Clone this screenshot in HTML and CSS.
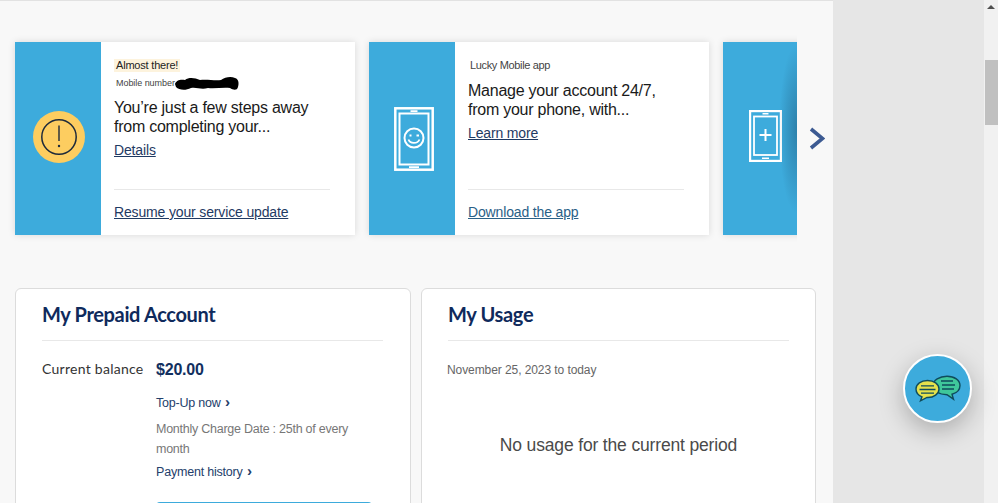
FILE: index.html
```html
<!DOCTYPE html>
<html lang="en">
<head>
<meta charset="utf-8">
<title>My Account</title>
<link rel="stylesheet" href="styles.css">
</head>
<body>
<div class="page">
  <main class="main">
    <section class="carousel">
      <div class="viewport">
        <article class="promo">
          <div class="promo-side">
            <svg class="icon-alert" width="52" height="52" viewBox="0 0 52 52"><circle cx="26" cy="26" r="26" fill="#fdcd60"/><circle cx="26" cy="26" r="17.2" fill="none" stroke="#1e2a3a" stroke-width="1.5"/><path d="M26 14.5V30" stroke="#1e2a3a" stroke-width="1.4" fill="none"/><circle cx="26" cy="35" r="1.2" fill="#1e2a3a"/></svg>
          </div>
          <div class="promo-body">
            <div class="promo-top">
              <span class="tag">Almost there!</span>
              <div class="meta">Mobile number<svg class="scribble" width="64" height="15" viewBox="0 0 64 15"><path d="M0 8C1 4 6 3 10 4C14 1 20 2 25 4C32 3 40 5 46 4C50 1 56 0 60 2C64 3 64 8 63 11C62 15 58 14 55 12C48 11 40 13 33 12C26 14 22 11 16 12C10 15 4 14 1 11Z" fill="#000"/></svg></div>
              <h3 class="promo-title">You’re just a few steps away<br>from completing your...</h3>
              <a class="link">Details</a>
            </div>
            <div class="promo-cta"><a class="link">Resume your service update</a></div>
          </div>
        </article>
        <article class="promo">
          <div class="promo-side">
            <svg class="icon-phone" width="40" height="64" viewBox="0 0 40 64" fill="none" stroke="#fff"><rect x="1.300" y="1.300" width="37.400" height="61.400" stroke-width="2.500"/><rect x="5.500" y="6.500" width="29" height="51" stroke-width="2"/><path d="M16.500 4.200h7M15 60.200h10" stroke-width="1.800"/><circle cx="20" cy="31" r="9.500" stroke-width="2"/><path d="M14.500 32.500c1.500 4.500 9 4.500 11 0" stroke-width="1.800"/><path d="M16.500 27.500v2M22.500 28.500h2.500" stroke-width="2"/></svg>
          </div>
          <div class="promo-body">
            <div class="promo-top">
              <span class="tag tag-plain">Lucky Mobile app</span>
              <h3 class="promo-title title-app">Manage your account 24/7,<br>from your phone, with...</h3>
              <a class="link">Learn more</a>
            </div>
            <div class="promo-cta"><a class="link link-light">Download the app</a></div>
          </div>
        </article>
        <article class="promo">
          <div class="promo-side">
            <svg class="icon-plus" width="33" height="52" viewBox="0 0 33 52" fill="none" stroke="#fff"><rect x="1.100" y="1.100" width="30.800" height="49.800" stroke-width="2.200"/><rect x="5" y="6.500" width="23" height="38.500" stroke-width="1.800"/><path d="M13.500 3.800h6M13 48.300h7" stroke-width="1.600"/><path d="M16.500 19v12M10.500 25h12" stroke-width="2"/></svg>
          </div>
        </article>
        <div class="fade"></div>
      </div>
      <button class="next" aria-label="Next"><svg width="16" height="23" viewBox="0 0 16 23" fill="none"><path d="M2 2l11.500 9.500L2 21" stroke="#3c5a92" stroke-width="3.600"/></svg></button>
    </section>
    <section class="panels">
      <article class="panel">
        <h2 class="panel-title">My Prepaid Account</h2>
        <div class="balance">
          <div class="balance-label">Current balance</div>
          <div class="balance-col">
            <div class="amount">$20.00</div>
            <a class="action action-top">Top-Up now <span class="chev">›</span></a>
            <p class="charge">Monthly Charge Date : 25th of every month</p>
            <a class="action">Payment history <span class="chev">›</span></a>
            <div class="cta-button"></div>
          </div>
        </div>
      </article>
      <article class="panel panel-usage">
        <h2 class="panel-title">My Usage</h2>
        <p class="period">November 25, 2023 to today</p>
        <p class="empty">No usage for the current period</p>
      </article>
    </section>
  </main>
  <aside class="side"></aside>
  <div class="scrollbar">
    <div class="scroll-up"></div>
    <div class="scroll-thumb"></div>
  </div>
</div>
<button class="chat" aria-label="Chat">
  <svg width="46" height="28" viewBox="0 0 46 28"><path d="M32 1.200c7.500 0 13 4 13 9.300 0 4.300-3.500 7.500-8 8.700l1.500 5-6.500-4.500c-8 0-14-4-14-9.300S24.500 1.200 32 1.200Z" fill="#3fc79b" stroke="#0f4c5c" stroke-width="1.400"/><path d="M12.500 5.500C6 5.500 1 9 1 14c0 3.800 2.500 6.500 6 7.800l-1.500 4 6.500-3.300c7 .3 12-3.800 12-8.500 0-5-5-8.500-11.500-8.500Z" fill="#e4e14c" stroke="#0f4c5c" stroke-width="1.400"/><path d="M6 10.800h13M4.500 14.500h16M6 18.200h13M26 6h12M27 10h13M27 14h12" stroke="#0f4c5c" stroke-width="1.300" fill="none"/></svg>
</button>
</body>
</html>
```

FILE: styles.css
```css
* { box-sizing: border-box; }
html, body { margin: 0; height: 503px; overflow: hidden; }
body { font-family: "Liberation Sans", Arial, sans-serif; color: #222; background: #f7f7f7; position: relative; }
.page { display: flex; height: 503px; overflow: hidden; }
.main { width: 833px; flex: none; background: #f8f8f8; border-top: 1px solid #e2e2e2; padding: 41px 0 0 0; overflow: hidden; }
.side { width: 151px; flex: none; background: #e6e6e6; }
.scrollbar { width: 14px; flex: none; background: #f1f1f1; display: flex; flex-direction: column; align-items: center; }
.scroll-up { width: 0; height: 0; margin-top: 5px; border: 4px solid transparent; border-top: 0; border-bottom: 4px solid #505050; }
.scroll-thumb { width: 13px; height: 65px; margin-top: 51px; background: #c0c0c0; }

.carousel { display: flex; align-items: flex-start; padding-left: 15px; }
.viewport { width: 782px; height: 193px; display: flex; gap: 14px; position: relative; flex: none; overflow: hidden; margin: -8px 0 -8px -8px; padding: 8px 0 8px 8px; box-sizing: content-box; }
.promo { width: 340px; height: 193px; flex: none; display: flex; background: #fff; box-shadow: 0 0 7px rgba(0,0,0,.13); }
.promo-side { width: 86px; flex: none; background: #3dabdc; display: flex; align-items: center; justify-content: center; }
.icon-alert { margin: 0 0 4px 1px; }
.icon-phone { margin: 0 0 0 3px; }
.icon-plus { margin: 0 2px 5px 0; }
.promo-body { flex: 1; padding: 13px 25px 0 13px; display: flex; flex-direction: column; min-width: 0; }
.promo-top { height: 135px; border-bottom: 1px solid #e8e8e8; }
.tag { display: inline-block; margin-left: 0; padding: 0 2px; background: #fdf3dd; font-size: 11px; letter-spacing: -.2px; line-height: 13px; color: #222; }
.tag-plain { background: none; margin-left: 0; color: #444; letter-spacing: -.35px; }
.meta { display: flex; align-items: center; height: 14px; margin: 3px 0 0 2px; font-size: 9px; letter-spacing: -.05px; color: #444; }
.scribble { margin: 1px 0 0 0; flex: none; }
.promo-title { margin: 8px 0 0; font-size: 16px; letter-spacing: -.25px; line-height: 19px; font-weight: 400; color: #1a1a1a; }
.title-app { margin-top: 8px; }
.link { display: inline-block; margin-top: 5px; font-size: 14px; letter-spacing: -.15px; line-height: 19px; color: #1f3a63; text-decoration: underline; }
.link-light { color: #2a6187; }
.promo-cta { padding-top: 8px; }
.fade { position: absolute; top: 8px; right: 0; width: 18px; height: 193px; background: radial-gradient(ellipse 18px 85px at 100% 45%, rgba(20,60,90,.38), rgba(20,60,90,0)); }
.next { margin: 85px 0 0 12px; padding: 0; border: 0; background: none; width: 16px; height: 23px; display: block; flex: none; }
.next svg { display: block; }

.panels { display: flex; gap: 10px; margin: 53px 0 0 15px; }
.panel { width: 396px; height: 260px; flex: none; background: #fff; border: 1px solid #dcdcdc; border-radius: 6px; padding: 0 27px 0 26px; }
.panel-usage { width: 395px; padding-right: 26px; }
.panel-title { margin: 0; height: 52px; padding-top: 12px; border-bottom: 1px solid #e8e8e8; font-family: Lato, sans-serif; font-size: 20px; line-height: 27px; font-weight: 700; color: #0f2a5c; letter-spacing: -.35px; }
.balance { display: flex; padding-top: 18px; }
.balance-label { width: 114px; flex: none; font-family: Lato, sans-serif; font-size: 14px; line-height: 19px; color: #333; letter-spacing: .27px; }
.balance-col { width: 216px; flex: none; }
.amount { font-size: 16px; letter-spacing: -.2px; line-height: 19px; font-weight: 700; color: #12305f; margin-top: 1px; }
.action { display: block; font-size: 12.500px; letter-spacing: -.2px; line-height: 17px; color: #24406b; }
.action-top { margin-top: 15px; }
.chev { font-weight: 700; font-size: 15px; line-height: 15px; margin-left: 1px; }
.charge { margin: 7px 0 4px; font-size: 12.500px; letter-spacing: -.25px; line-height: 20px; color: #777; }
.cta-button { height: 40px; margin-top: 21px; border-radius: 4px; background: #3dabdc; }
.period { margin: 22px 0 0 -1px; font-size: 12px; letter-spacing: -.08px; line-height: 15px; color: #666; }
.empty { margin: 56px 0 0; text-align: center; font-size: 17.500px; letter-spacing: -.16px; line-height: 22px; color: #4a4a4a; }

.chat { position: absolute; left: 903px; top: 354px; width: 69px; height: 69px; padding: 0; border: 2px solid #fff; border-radius: 50%; background: #3dabdc; box-shadow: 0 8px 24px rgba(0,0,0,.25); display: flex; align-items: center; justify-content: center; }
```
